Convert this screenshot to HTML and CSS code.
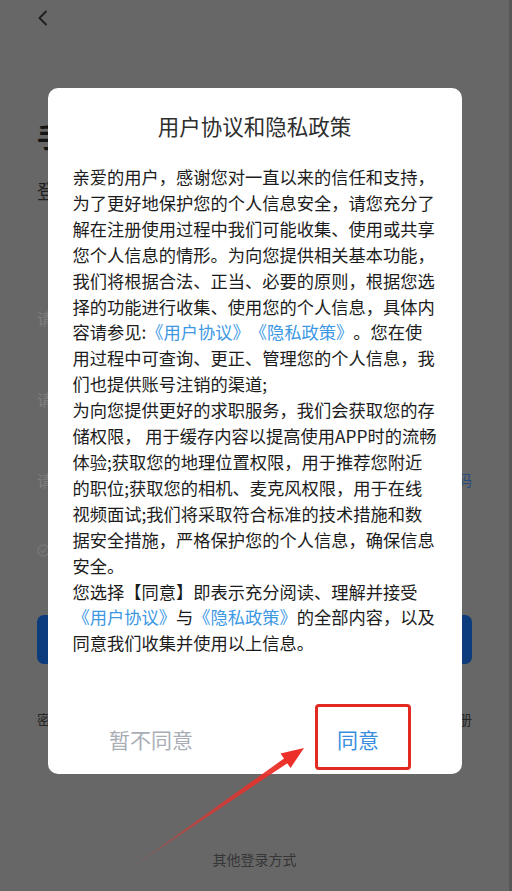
FILE: index.html
```html
<!DOCTYPE html>
<html lang="zh-CN">
<head>
<meta charset="utf-8">
<title>用户协议和隐私政策</title>
<link rel="stylesheet" href="styles.css">
</head>
<body>
<div class="screen">
  <div class="page">
    <div class="topbar">
      <svg class="back" width="12" height="16" viewBox="0 0 12 16"><path d="M9 1.5 L2.5 8 L9 14.5" fill="none" stroke="#1e1e1e" stroke-width="1.8" stroke-linecap="round" stroke-linejoin="round"/></svg>
    </div>
    <div class="title">手机号登录</div>
    <div class="subtitle">登录后查看更多职位</div>
    <div class="field field-first">请输入手机号</div>
    <div class="field">请输入图形验证码</div>
    <div class="field field-code"><span>请输入验证码</span><span class="code">获取验证码</span></div>
    <div class="agree">
      <svg width="13" height="13" viewBox="0 0 14 14"><circle cx="7" cy="7" r="6" fill="none" stroke="#7a7a7a" stroke-width="1.2"/><path d="M4 7.2 L6.2 9.2 L10 5" fill="none" stroke="#7a7a7a" stroke-width="1.2"/></svg>
      <span>我已阅读并同意用户协议和隐私政策</span>
    </div>
    <div class="login-btn">登录</div>
    <div class="links"><span>密码登录</span><span>立即注册</span></div>
    <div class="other">其他登录方式</div>
  </div>
  <div class="scrollbar"></div>

  <div class="overlay">
    <div class="dialog">
      <h2 class="dialog-title">用户协议和隐私政策</h2>
      <p class="dialog-body">亲爱的用户，感谢您对一直以来的信任和支持，<br>为了更好地保护您的个人信息安全，请您充分了<br>解在注册使用过程中我们可能收集、使用或共享<br>您个人信息的情形。为向您提供相关基本功能，<br>我们将根据合法、正当、必要的原则，根据您选<br>择的功能进行收集、使用您的个人信息，具体内<br>容请参见:<span class="link">《用户协议》《隐私政策》</span>。您在使<br>用过程中可查询、更正、管理您的个人信息，我<br>们也提供账号注销的渠道;<br>为向您提供更好的求职服务，我们会获取您的存<br>储权限， 用于缓存内容以提高使用APP时的流畅<br>体验;获取您的地理位置权限，用于推荐您附近<br>的职位;获取您的相机、麦克风权限，用于在线<br>视频面试;我们将采取符合标准的技术措施和数<br>据安全措施，严格保护您的个人信息，确保信息<br>安全。<br>您选择【同意】即表示充分阅读、理解并接受<br><span class="link">《用户协议》</span>与<span class="link">《隐私政策》</span>的全部内容，以及<br>同意我们收集并使用以上信息。</p>
      <div class="actions">
        <button class="btn btn-cancel">暂不同意</button>
        <button class="btn btn-ok">同意</button>
      </div>
      <div class="highlight"></div>
    </div>
  </div>

  <svg class="arrow" width="512" height="891" viewBox="0 0 512 891">
    <defs>
      <linearGradient id="ag" gradientUnits="userSpaceOnUse" x1="125" y1="872" x2="290" y2="757">
        <stop offset="0" stop-color="#e8302a" stop-opacity="0"/>
        <stop offset="0.5" stop-color="#e8302a" stop-opacity="0.7"/>
        <stop offset="1" stop-color="#ec2f28"/>
      </linearGradient>
    </defs>
    <polygon points="125,872 287.5,756 290,761.5" fill="url(#ag)"/>
    <polygon points="304,748 290.5,768 280.5,753.5" fill="#ec2f28"/>
  </svg>
</div>
</body>
</html>
```
FILE: styles.css
```css
* { box-sizing: border-box; }
html, body { margin: 0; padding: 0; }
body {
  width: 512px;
  height: 891px;
  overflow: hidden;
  background: #666666;
  font-family: "Noto Sans CJK SC", "Noto Sans", sans-serif;
}
.screen {
  position: relative;
  width: 512px;
  height: 891px;
  display: flex;
}
.page {
  width: 509px;
  height: 891px;
  background: #676767;
  display: flex;
  flex-direction: column;
  padding: 0 37px 0 37px;
}
.scrollbar {
  width: 3px;
  height: 891px;
  background: #575757;
}
.topbar {
  height: 36px;
  padding-top: 10px;
}
.back { display: block; margin-left: 0; }
.title {
  margin-top: 83px;
  font-size: 28px;
  line-height: 34px;
  font-weight: 700;
  color: #141414;
}
.subtitle {
  margin-top: 26px;
  font-size: 19px;
  line-height: 24px;
  color: #1e1e1e;
}
.field {
  height: 81px;
  display: flex;
  align-items: flex-end;
  font-size: 16px;
  line-height: 22px;
  color: #7d7d7d;
}
.field-first { height: 126px; }
.field-code { justify-content: space-between; }
.field-code .code { color: #244a80; font-size: 15px; }
.agree {
  margin-top: 50px;
  display: flex;
  align-items: center;
  gap: 8px;
  font-size: 13px;
  color: #7a7a7a;
}
.agree svg { flex: none; }
.login-btn {
  margin-top: 55px;
  height: 49px;
  border-radius: 7px;
  background: #0c3c7b;
  color: #5c7da8;
  font-size: 17px;
  display: flex;
  align-items: center;
  justify-content: center;
}
.links {
  margin-top: 45px;
  display: flex;
  justify-content: space-between;
  font-size: 14px;
  line-height: 20px;
  color: #262626;
}
.other {
  margin-top: 120px;
  text-align: center;
  font-size: 14px;
  line-height: 20px;
  color: #363636;
}

.overlay {
  position: absolute;
  left: 0;
  top: 0;
  width: 509px;
  height: 891px;
  display: flex;
  justify-content: center;
  align-items: flex-start;
  padding-top: 88px;
}
.dialog {
  position: relative;
  width: 414px;
  background: #ffffff;
  border-radius: 10px;
  padding: 23px 0 0 0;
}
.dialog-title {
  margin: 0;
  text-align: center;
  font-size: 21.5px;
  line-height: 30px;
  font-weight: 400;
  color: #2e2e2e;
}
.dialog-body {
  margin: 23px 0 0 0;
  padding: 0 20px 0 25px;
  font-size: 17.25px;
  line-height: 25.9px;
  color: #1c1c1c;
  white-space: nowrap;
  text-spacing-trim: space-all;
}
.link { color: #3d98e4; }
.actions {
  margin-top: 48px;
  height: 70px;
  display: flex;
}
.btn {
  flex: 1;
  border: 0;
  background: transparent;
  font-family: inherit;
  font-size: 21px;
  padding: 0;
  cursor: pointer;
}
.btn-cancel { color: #a9aeb6; }
.btn-ok { color: #3a8ee0; }
.highlight {
  position: absolute;
  left: 267px;
  top: 616px;
  width: 96px;
  height: 66px;
  border: 3.5px solid #e22a23;
  border-radius: 4px;
  pointer-events: none;
}
.arrow {
  position: absolute;
  left: 0;
  top: 0;
  pointer-events: none;
}
```
